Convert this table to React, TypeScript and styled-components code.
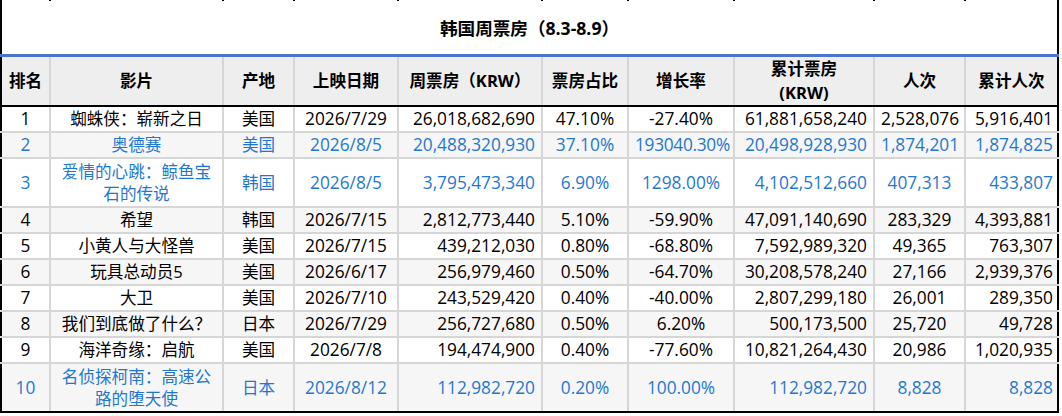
import React from "react";
import styled, { createGlobalStyle } from "styled-components";

const GlobalStyle = createGlobalStyle`
  body {
    margin: 0;
    background: #ffffff;
    font-family: "Open Sans", "Noto Sans CJK SC", sans-serif;
  }
`;

type Align = "center" | "right";

interface Film {
  rank: number;
  title: string;
  origin: string;
  release: string;
  weekly: string;
  share: string;
  growth: string;
  total: string;
  admits: string;
  totalAdmits: string;
  isNew?: boolean;
}

const films: Film[] = [
  { rank: 1, title: "蜘蛛侠：崭新之日", origin: "美国", release: "2026/7/29", weekly: "26,018,682,690", share: "47.10%", growth: "-27.40%", total: "61,881,658,240", admits: "2,528,076", totalAdmits: "5,916,401" },
  { rank: 2, title: "奥德赛", origin: "美国", release: "2026/8/5", weekly: "20,488,320,930", share: "37.10%", growth: "193040.30%", total: "20,498,928,930", admits: "1,874,201", totalAdmits: "1,874,825", isNew: true },
  { rank: 3, title: "爱情的心跳：鲸鱼宝石的传说", origin: "韩国", release: "2026/8/5", weekly: "3,795,473,340", share: "6.90%", growth: "1298.00%", total: "4,102,512,660", admits: "407,313", totalAdmits: "433,807", isNew: true },
  { rank: 4, title: "希望", origin: "韩国", release: "2026/7/15", weekly: "2,812,773,440", share: "5.10%", growth: "-59.90%", total: "47,091,140,690", admits: "283,329", totalAdmits: "4,393,881" },
  { rank: 5, title: "小黄人与大怪兽", origin: "美国", release: "2026/7/15", weekly: "439,212,030", share: "0.80%", growth: "-68.80%", total: "7,592,989,320", admits: "49,365", totalAdmits: "763,307" },
  { rank: 6, title: "玩具总动员5", origin: "美国", release: "2026/6/17", weekly: "256,979,460", share: "0.50%", growth: "-64.70%", total: "30,208,578,240", admits: "27,166", totalAdmits: "2,939,376" },
  { rank: 7, title: "大卫", origin: "美国", release: "2026/7/10", weekly: "243,529,420", share: "0.40%", growth: "-40.00%", total: "2,807,299,180", admits: "26,001", totalAdmits: "289,350" },
  { rank: 8, title: "我们到底做了什么？", origin: "日本", release: "2026/7/29", weekly: "256,727,680", share: "0.50%", growth: "6.20%", total: "500,173,500", admits: "25,720", totalAdmits: "49,728" },
  { rank: 9, title: "海洋奇缘：启航", origin: "美国", release: "2026/7/8", weekly: "194,474,900", share: "0.40%", growth: "-77.60%", total: "10,821,264,430", admits: "20,986", totalAdmits: "1,020,935" },
  { rank: 10, title: "名侦探柯南：高速公路的堕天使", origin: "日本", release: "2026/8/12", weekly: "112,982,720", share: "0.20%", growth: "100.00%", total: "112,982,720", admits: "8,828", totalAdmits: "8,828", isNew: true },
];

const columnWidths = [49, 173, 71, 104, 144, 86, 106, 140, 91, 93];

const Table = styled.table`
  border-collapse: collapse;
  table-layout: fixed;
  width: 1059px;
  color: #000000;
`;

const Stub = styled.td`
  height: 1px;
  padding: 0;
  border-left: 2px solid #000000;
  border-right: 2px solid #000000;
`;

const TitleCell = styled.td`
  height: 53px;
  padding: 0;
  text-align: center;
  vertical-align: middle;
  font-size: 17.6px;
  font-weight: 700;
  border-left: 2px solid #000000;
  border-right: 2px solid #000000;
  border-bottom: 3px solid #4d74cc;
`;

const HeadCell = styled.th`
  height: 44px;
  padding: 0 4px;
  background: #eeeeee;
  text-align: center;
  vertical-align: middle;
  font-size: 16.6px;
  line-height: 24px;
  font-weight: 700;
  border: 2px solid #d6d6d6;
  border-top: none;
  border-bottom: 2px solid #000000;

  &:first-child {
    border-left: 2px solid #000000;
  }
  &:last-child {
    border-right: 2px solid #000000;
  }
`;

const Row = styled.tr<{ $shade: boolean; $new?: boolean; $tall?: boolean }>`
  background: ${(p) => (p.$shade ? "#f6f6f6" : "#ffffff")};
  color: ${(p) => (p.$new ? "#1f78cf" : "#000000")};

  td {
    padding-top: ${(p) => (p.$tall ? "1.5px" : "1px")};
    padding-bottom: ${(p) => (p.$tall ? "1.5px" : "1px")};
  }

  &:last-child td {
    border-bottom: 2px solid #000000;
  }
`;

const Cell = styled.td<{ $align?: Align; $num?: boolean }>`
  height: 22px;
  padding-left: 6px;
  padding-right: 6px;
  text-align: ${(p) => p.$align ?? "center"};
  vertical-align: middle;
  font-size: ${(p) => (p.$num ? "17.3px" : "16.6px")};
  line-height: 22px;
  white-space: ${(p) => (p.$num ? "nowrap" : "normal")};
  border: 2px solid #d6d6d6;

  &:first-child {
    border-left: 2px solid #000000;
  }
  &:last-child {
    border-right: 2px solid #000000;
    padding-right: 4px;
  }
`;

const Narrow = styled.span`
  letter-spacing: -0.3px;
`;

export default function App() {
  return (
    <>
      <GlobalStyle />
      <Table>
        <colgroup>
          {columnWidths.map((w, i) => (
            <col key={i} style={{ width: w }} />
          ))}
        </colgroup>
        <tbody>
          <tr>
            {columnWidths.map((_, i) => (
              <Stub key={i} />
            ))}
          </tr>
          <tr>
            <TitleCell colSpan={10}>韩国周票房（8.3-8.9）</TitleCell>
          </tr>
          <tr>
            <HeadCell>排名</HeadCell>
            <HeadCell>影片</HeadCell>
            <HeadCell>产地</HeadCell>
            <HeadCell>上映日期</HeadCell>
            <HeadCell>周票房（KRW）</HeadCell>
            <HeadCell>票房占比</HeadCell>
            <HeadCell>增长率</HeadCell>
            <HeadCell>
              累计票房
              <br />
              (KRW)
            </HeadCell>
            <HeadCell>人次</HeadCell>
            <HeadCell>累计人次</HeadCell>
          </tr>
          {films.map((f) => (
            <Row
              key={f.rank}
              $shade={f.rank % 2 === 0}
              $new={f.isNew}
              $tall={f.title.length > 9}
            >
              <Cell $num>{f.rank}</Cell>
              <Cell>{f.title}</Cell>
              <Cell>{f.origin}</Cell>
              <Cell $num>{f.release}</Cell>
              <Cell $num $align="right">{f.weekly}</Cell>
              <Cell $num>{f.share}</Cell>
              <Cell $num>
                {f.growth.length > 8 ? <Narrow>{f.growth}</Narrow> : f.growth}
              </Cell>
              <Cell $num $align="right">{f.total}</Cell>
              <Cell $num>{f.admits}</Cell>
              <Cell $num $align="right">{f.totalAdmits}</Cell>
            </Row>
          ))}
        </tbody>
      </Table>
    </>
  );
}
